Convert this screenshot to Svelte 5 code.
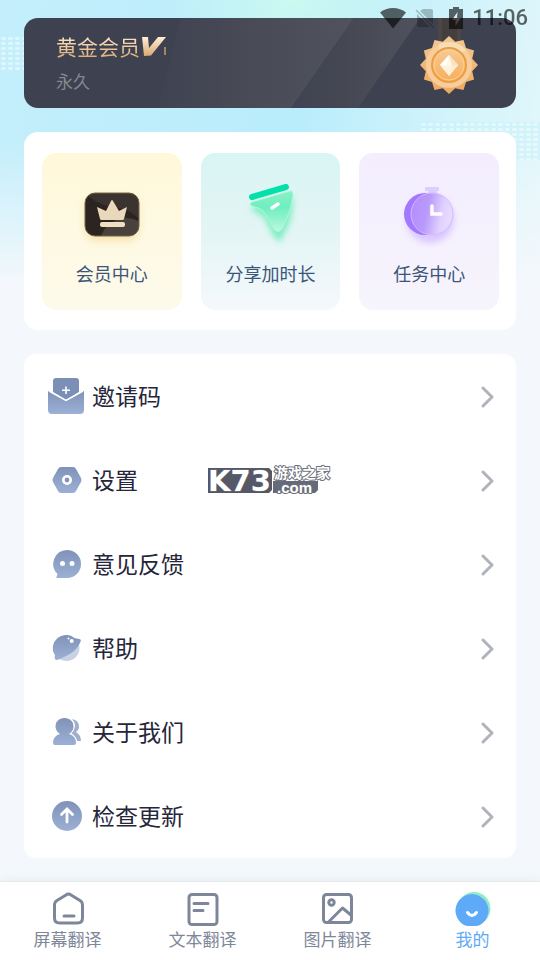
<script lang="ts">
  interface Item {
    id: string;
    label: string;
  }

  const features: Item[] = [
    { id: "member", label: "会员中心" },
    { id: "share", label: "分享加时长" },
    { id: "task", label: "任务中心" },
  ];

  const menu: Item[] = [
    { id: "invite", label: "邀请码" },
    { id: "settings", label: "设置" },
    { id: "feedback", label: "意见反馈" },
    { id: "help", label: "帮助" },
    { id: "about", label: "关于我们" },
    { id: "update", label: "检查更新" },
  ];

  const tabs: Item[] = [
    { id: "screen", label: "屏幕翻译" },
    { id: "text", label: "文本翻译" },
    { id: "image", label: "图片翻译" },
    { id: "mine", label: "我的" },
  ];

  let activeTab = $state("mine");

  // twelve-pointed edge of the medal
  const medalPoints = Array.from({ length: 24 }, (_, i) => {
    const r = i % 2 === 0 ? 29 : 24;
    const a = (i * Math.PI) / 12;
    return `${(30 + r * Math.sin(a)).toFixed(1)},${(47 - r * Math.cos(a)).toFixed(1)}`;
  }).join(" ");
</script>

<div class="page">
  <div class="dots dots-left"></div>
  <div class="dots dots-right"></div>

  <div class="status">
    <svg width="28" height="22" viewBox="0 0 28 22">
      <path d="M1 5.500C8-.5 20-.5 27 5.500L14 21.500Z" />
    </svg>
    <svg class="sim" width="20" height="22" viewBox="0 0 20 22">
      <path d="M8 2h8q2 0 2 2v13L5 4zM2 7l13 13H4q-2 0-2-2z" />
      <path d="M1 3l18 18" stroke="#000" stroke-width="1.500" />
    </svg>
    <svg class="battery" width="14" height="22" viewBox="0 0 14 22">
      <path
        fill-rule="evenodd"
        d="M4 0h6v2h4v20H0V2h4zM8.500 5L3 13h3.500v6L11.500 11H8z"
      />
    </svg>
    <span>11:06</span>
  </div>

  <main>
    <section class="vip">
      <svg class="shine" viewBox="0 0 492 90" preserveAspectRatio="xMaxYMid slice">
        <defs>
          <linearGradient id="shineA">
            <stop offset="0" stop-color="#3f4251" />
            <stop offset=".4" stop-color="#474a55" />
            <stop offset="1" stop-color="#50535d" />
          </linearGradient>
          <linearGradient id="shineB">
            <stop offset="0" stop-color="#3f4251" />
            <stop offset=".4" stop-color="#454853" />
            <stop offset="1" stop-color="#4f525d" />
          </linearGradient>
        </defs>
        <path d="M157 0H330L267 90H134Z" fill="url(#shineA)" />
        <path d="M330 0H396L334 90H267Z" fill="url(#shineB)" />
      </svg>
      <div class="vip-info">
        <h1>
          <span>黄金会员</span>
          <svg width="28" height="22" viewBox="0 0 28 22" role="img" aria-label="V1">
            <defs>
              <linearGradient id="gold" x2="0" y2="1">
                <stop offset="0" stop-color="#ffeed6" />
                <stop offset="1" stop-color="#d9a871" />
              </linearGradient>
            </defs>
            <path d="M2 2H8L9 13L18 2H26L11 20.500L4 21Z" fill="url(#gold)" />
            <path d="M25 12V20" stroke="#c59c70" stroke-width="1.500" />
          </svg>
        </h1>
        <p>永久</p>
      </div>
      <svg class="medal" width="60" height="90" viewBox="0 0 60 90">
        <defs>
          <linearGradient id="star" x2="0" y2="1">
            <stop offset="0" stop-color="#f3c894" />
            <stop offset="1" stop-color="#eea85e" />
          </linearGradient>
          <linearGradient id="core" x2="0" y2="1">
            <stop offset="0" stop-color="#f5ca98" />
            <stop offset="1" stop-color="#f9ad57" />
          </linearGradient>
        </defs>
        <path d="M19 0H42V26H19Z" fill="#4e4644" />
        <path d="M23 0H38V26H23Z" fill="#453e3f" />
        <polygon points={medalPoints} fill="url(#star)" />
        <circle cx="30" cy="47" r="23" fill="#f9cd99" />
        <path d="M20 26A23 23 0 0 1 47 32L39 37Q30 29 20 34Z" fill="#f8deb6" />
        <circle cx="30" cy="47" r="17" fill="url(#core)" stroke="#eb9e43" stroke-width="2" />
        <circle cx="30" cy="47" r="15" fill="none" stroke="#ffd195" />
        <path d="M30 37L39 47L30 58L21 47Z" fill="#fff7e6" />
        <path d="M30 37L33 48L30 58L39 47Z" fill="#f7e3c3" />
        <path d="M21 47L30 48L39 47L30 58Z" fill="#fff0d4" opacity=".7" />
        <path d="M30 37L27 48L21 47Z" fill="#fff" />
      </svg>
    </section>

    <section class="features">
      {#each features as item}
        <button class="feature {item.id}">
          <svg width="80" height="74" viewBox="0 0 80 74">
            {#if item.id === "member"}
              <defs>
                <filter id="blurGold" x="-30%" y="-30%" width="160%" height="160%">
                  <feGaussianBlur stdDeviation="5" />
                </filter>
                <clipPath id="badge"><rect x="13" y="16" width="54" height="43" rx="10" /></clipPath>
              </defs>
              <rect x="14" y="21" width="52" height="42" rx="10" fill="#f6dfa6" filter="url(#blurGold)" />
              <g clip-path="url(#badge)">
                <rect x="13" y="16" width="54" height="43" fill="#2b2420" />
                <path d="M13 16H67V42Q57 31 39 30Q24 27 13 16Z" fill="#3a332f" />
                <circle cx="54" cy="67" r="26" fill="#49413c" />
              </g>
              <rect x="13" y="16" width="54" height="43" rx="10" fill="none" stroke="#786447" />
              <path
                d="M25 30L34 34L39 24Q40 22 41 24L47 34L55 30L52 42Q52 43 50 43H30Q28 43 28 42Z"
                fill="#ead8bb"
              />
              <rect x="28" y="45" width="25" height="5" rx="2" fill="#f2dec0" />
            {:else if item.id === "share"}
              <defs>
                <linearGradient id="mint" x2="0" y2="1">
                  <stop offset="0" stop-color="#8af1c6" />
                  <stop offset=".4" stop-color="#6eefc0" />
                  <stop offset="1" stop-color="#b9f8df" />
                </linearGradient>
                <filter id="blurMint" x="-30%" y="-30%" width="160%" height="160%">
                  <feGaussianBlur stdDeviation="3" />
                </filter>
              </defs>
              <path
                d="M21 30L61 18Q65 28 59 47L50 65Q45 63 39 50L34 40L23 34Z"
                fill="#62edb3"
                filter="url(#blurMint)"
                opacity=".8"
              />
              <path
                d="M22 25L60 14Q63 13 63 18Q61 34 52 52Q48 57 44 52Q39 42 33 34Q30 31 22 29Q18 27 22 25Z"
                fill="url(#mint)"
                stroke="#b6f8dc"
                stroke-width=".8"
              />
              <path d="M22 20L56 10" stroke="#02e1aa" stroke-width="6" stroke-linecap="round" />
              <path d="M42 31L48 27" stroke="#fff" stroke-width="3.500" stroke-linecap="round" />
            {:else}
              <defs>
                <linearGradient id="violet" x2="1" y2=".2">
                  <stop offset="0" stop-color="#b48cff" />
                  <stop offset=".45" stop-color="#b99afb" />
                  <stop offset=".8" stop-color="#dfd0ff" />
                  <stop offset="1" stop-color="#e6dbff" />
                </linearGradient>
                <filter id="blurViolet" x="-30%" y="-30%" width="160%" height="160%">
                  <feGaussianBlur stdDeviation="3" />
                </filter>
              </defs>
              <circle cx="41" cy="42" r="24" fill="#d3bdff" filter="url(#blurViolet)" opacity=".8" />
              <rect x="36" y="10" width="14" height="4" rx="1" fill="#decdff" />
              <path d="M39 14H48V17H39Z" fill="#decdff" />
              <circle cx="36" cy="37" r="21" fill="#a278ff" />
              <circle cx="43" cy="37" r="21" fill="url(#violet)" stroke="#d4baff" />
              <path
                d="M43 29V37H52"
                fill="none"
                stroke="#fff"
                stroke-width="3.500"
                stroke-linecap="round"
              />
            {/if}
          </svg>
          <span>{item.label}</span>
        </button>
      {/each}
    </section>

    <section class="menu">
      <svg width="0" height="0" class="shared">
        <defs>
          <linearGradient id="steel" x2="0" y2="1">
            <stop offset="0" stop-color="#8092b7" />
            <stop offset="1" stop-color="#9cb0d6" />
          </linearGradient>
        </defs>
      </svg>
      {#each menu as item}
        <button class="row">
          <svg width="36" height="36" viewBox="0 0 36 36" fill="url(#steel)">
            {#if item.id === "invite"}
              <path d="M8 0H28Q31 0 31 3V14L18 22L5 14V3Q5 0 8 0Z" fill="#7c8fb6" />
              <path d="M0 14Q0 12 2 14L18 23L34 14Q36 12 36 14V32Q36 36 32 36H4Q0 36 0 32Z" />
              <path d="M1 13L18 22.500L35 13" fill="none" stroke="#fff" stroke-width="1.500" />
              <path d="M18 8.500V16M14 12.300H22" stroke="#fff" stroke-width="1.600" />
            {:else if item.id === "settings"}
              <path
                d="M13 5H25Q27 5 28 7L33 16Q34 18 33 20L28 29Q27 31 25 31H13Q11 31 10 29L5 20Q4 18 5 16L10 7Q11 5 13 5Z"
              />
              <circle cx="19" cy="18" r="3.700" fill="#8194bb" stroke="#fff" stroke-width="2.600" />
            {:else if item.id === "feedback"}
              <path d="M19 4A14 14 0 1 1 19 32H9Q8 32 8.500 31L9.500 28A14 14 0 0 1 19 4Z" />
              <circle cx="14.500" cy="17.500" r="2.500" fill="#fff" />
              <circle cx="24" cy="17.500" r="2.500" fill="#fff" />
            {:else if item.id === "help"}
              <circle cx="18.500" cy="18" r="13" fill="#c9d2e5" />
              <path
                d="M18 5Q23 5 26 8L31 9Q34 9 32 13Q28 22 16 27Q11 30 8 30Q6 29 7 25Q4 21 5 16Q7 6 18 5Z"
              />
              <circle cx="23.700" cy="11" r="2" fill="#fff" />
              <circle cx="20.500" cy="8.500" r="1" fill="#fff" />
            {:else if item.id === "about"}
              <path
                d="M24 5Q31 6 31 13Q31 16 28 18Q33 21 33 27H27Q25 22 22 20Q27 16 27 11Q27 8 24 5Z"
                fill="#a0afcf"
              />
              <circle cx="16.500" cy="12.500" r="10" fill="#fff" />
              <path d="M4 31Q4 22 11 19H22Q29 21 30 31Z" fill="#fff" />
              <path
                d="M16.500 4A8.500 8.500 0 0 1 21 20Q28 22 28 29Q28 31 26 31H7Q5 31 5 29Q5 22 12 20A8.500 8.500 0 0 1 16.500 4Z"
              />
            {:else}
              <circle cx="19" cy="18" r="15" />
              <path
                d="M19 24V12M13.500 16.500L19 11L24.500 16.500"
                fill="none"
                stroke="#fff"
                stroke-width="2.800"
                stroke-linecap="round"
              />
            {/if}
          </svg>
          <span>{item.label}</span>
          <svg class="arrow" width="14" height="24" viewBox="0 0 14 24">
            <path d="M3 4L12 13L3 22" />
          </svg>
        </button>
      {/each}

      <svg class="mark" width="126" height="30" viewBox="0 0 126 30">
        <path d="M0 2H61L64 5V24L61 27H0Z" fill="#555867" />
        <path d="M65 15H110V24L107 27H65Z" fill="#666977" />
        <text class="mark-big" x="0" y="25">K73</text>
        <text class="mark-cn" x="66" y="12">游戏之家</text>
        <text class="mark-com" x="69" y="27">.com</text>
      </svg>
    </section>
  </main>

  <nav>
    {#each tabs as tab}
      <button
        class="tab"
        class:active={activeTab === tab.id}
        onclick={() => (activeTab = tab.id)}
      >
        <svg width="36" height="36" viewBox="0 0 36 36">
          {#if tab.id === "screen"}
            <path
              class="line"
              d="M16 4Q18.500 2 21 4L30 9.500Q32.500 11 32.500 14V27Q32.500 32 27.500 32H9.500Q4.500 32 4.500 27V14Q4.500 11 7 9.500Z"
            />
            <path class="line" d="M14 25H24" />
          {:else if tab.id === "text"}
            <rect class="line" x="4" y="3.500" width="28" height="30" rx="3" />
            <path class="line" d="M9 12.500H23M9 19.500H18" />
          {:else if tab.id === "image"}
            <rect class="line" x="3.500" y="3.500" width="28" height="28" rx="3" />
            <circle class="line" cx="11.500" cy="11.500" r="2.700" />
            <path class="line" d="M8.500 31L22.500 17L31.500 24.500" />
          {:else}
            <circle cx="19" cy="17.500" r="16.500" fill="#91edc6" />
            <path d="M9 34A16.500 16.500 0 1 1 25 34Q23 35 20 35H14Q11 35 9 34Z" fill="#5eaaf8" />
            <path class="smile" d="M12.500 21.500Q17 27.500 21.500 21.500" />
          {/if}
        </svg>
        <span>{tab.label}</span>
      </button>
    {/each}
  </nav>
</div>

<style>
  :global(body) {
    background: #f4f8fc;
  }

  .page {
    position: relative;
    display: flex;
    flex-direction: column;
    min-height: 100vh;
    font-family: "Noto Sans CJK SC", "Noto Sans", sans-serif;
    background:
      radial-gradient(ellipse 130px 90px at 54% 0, rgba(206, 250, 239, 0.9), transparent),
      linear-gradient(to bottom, transparent 140px, #f4f8fc 285px),
      linear-gradient(100deg, #c4eefb 0, #b9edfc 45%, #d8f5fa 72%, #f3f9fc 96%);
  }

  button {
    border: 0;
    padding: 0;
    background: none;
    font: inherit;
    color: inherit;
    cursor: pointer;
  }

  svg {
    display: block;
    flex: none;
  }

  /* dotted texture on the sky */
  .dots {
    position: absolute;
    background-image: radial-gradient(ellipse 3px 2px, rgba(255, 255, 255, 0.45) 70%, transparent);
    background-size: 7px 5px;
  }

  .dots-left {
    top: 36px;
    left: 0;
    width: 24px;
    height: 36px;
  }

  .dots-right {
    top: 122px;
    right: 0;
    width: 120px;
    height: 38px;
    background-color: rgba(200, 242, 250, 0.6);
  }

  .status {
    position: absolute;
    top: 6px;
    right: 12px;
    z-index: 2;
    display: flex;
    align-items: center;
    gap: 8px;
    height: 24px;
    font-family: Roboto, sans-serif;
    font-size: 22px;
    font-weight: 500;
    line-height: 26px;
    opacity: 0.6;
  }

  .sim {
    opacity: 0.4;
  }

  .battery {
    margin: 0 1px 0 6px;
  }

  main {
    position: relative;
    flex: 1;
    display: flex;
    flex-direction: column;
    gap: 24px;
    padding: 18px 24px 24px;
  }

  .vip {
    position: relative;
    display: flex;
    justify-content: space-between;
    height: 90px;
    padding: 0 37px 0 32px;
    border-radius: 14px;
    overflow: hidden;
    background: #3e4150;
  }

  .shine {
    position: absolute;
    inset: 0;
    width: 100%;
    height: 100%;
  }

  .vip-info,
  .medal {
    position: relative;
  }

  h1 {
    display: flex;
    align-items: center;
    margin: 13px 0 0;
    font-size: 21px;
    font-weight: 400;
    line-height: 30px;
  }

  h1 span {
    color: transparent;
    background: linear-gradient(#ffe6c5 20%, #dbb180 85%);
    background-clip: text;
  }

  p {
    margin: 8px 0 0;
    font-size: 17px;
    line-height: 24px;
    color: #858791;
  }

  .features {
    display: grid;
    grid-template-columns: repeat(3, 1fr);
    gap: 19px;
    padding: 21px 17px 20px 18px;
    border-radius: 14px;
    background: #fff;
  }

  .feature {
    display: flex;
    flex-direction: column;
    align-items: center;
    gap: 10px;
    padding: 24px 0 25px;
    border-radius: 14px;
    font-size: 18px;
    line-height: 24px;
    color: #3b5479;
  }

  .member {
    background: linear-gradient(#fff8da, #fdfaeb);
  }

  .share {
    background: linear-gradient(#d8f5f4, #e3f5f4 50%, #f5f8fc);
  }

  .task {
    background: linear-gradient(#f3edfe, #f6f4fc);
  }

  .menu {
    position: relative;
    border-radius: 12px;
    background: #fff;
  }

  .shared {
    position: absolute;
  }

  .row {
    display: flex;
    align-items: center;
    gap: 8px;
    width: 100%;
    height: 84px;
    padding: 0 22px 0 24px;
    font-size: 23px;
    line-height: 32px;
    color: #25263a;
  }

  .row span {
    padding-bottom: 2px;
  }

  .arrow {
    margin-left: auto;
    fill: none;
    stroke: #b0b3bb;
    stroke-width: 3;
    stroke-linecap: round;
    stroke-linejoin: round;
  }

  .mark {
    position: absolute;
    top: 112px;
    left: 184px;
    pointer-events: none;
    overflow: visible;
  }

  .mark text {
    fill: #fff;
    stroke: #6d707d;
    paint-order: stroke;
    stroke-linejoin: round;
    font-weight: 700;
  }

  .mark-big {
    font: 29px "DejaVu Sans", sans-serif;
    stroke-width: 1px;
  }

  .mark-cn {
    font-size: 14px;
    stroke-width: 2px;
  }

  .mark-com {
    font: 15px "Liberation Sans", sans-serif;
    stroke-width: 2px;
  }

  nav {
    position: relative;
    display: grid;
    grid-template-columns: repeat(4, 1fr);
    background: #fff;
    box-shadow:
      0 -1px 0 #e3e9ea,
      0 -3px 8px rgba(90, 130, 130, 0.08);
  }

  .tab {
    display: flex;
    flex-direction: column;
    align-items: center;
    padding: 9px 0;
    font-size: 17px;
    line-height: 24px;
    color: #7e8799;
  }

  .line,
  .smile {
    fill: none;
    stroke: #7e8799;
    stroke-width: 3;
    stroke-linecap: round;
    stroke-linejoin: round;
  }

  .smile {
    stroke: #fff;
  }

  .tab.active {
    color: #5eaaf8;
  }
</style>
